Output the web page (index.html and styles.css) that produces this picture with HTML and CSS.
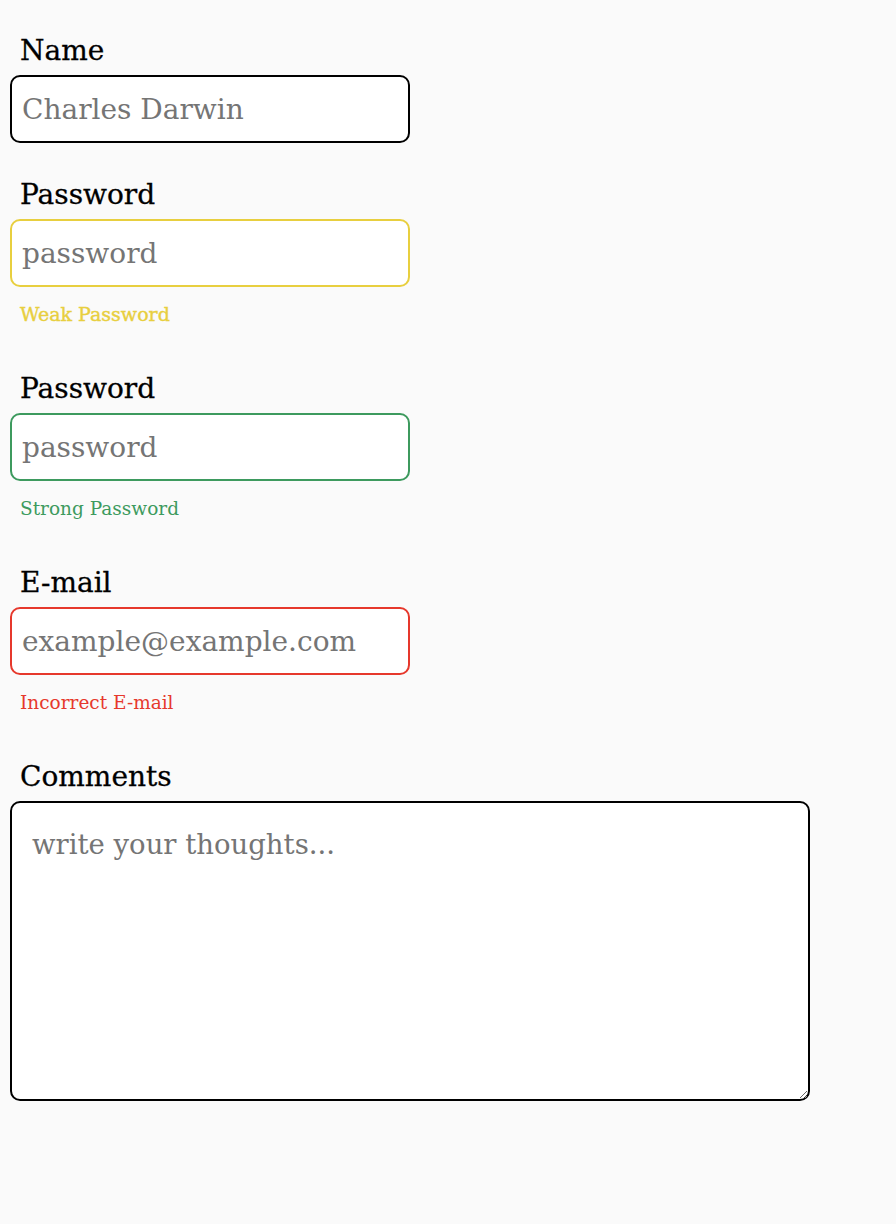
FILE: index.html
```html
<!DOCTYPE html>
<html lang="en">
<head>
<meta charset="utf-8">
<title>Form</title>
<link rel="stylesheet" href="styles.css">
</head>
<body>
<form class="form">
  <div class="field">
    <label class="label" for="name">Name</label>
    <input class="input" id="name" type="text" placeholder="Charles Darwin">
  </div>
  <div class="field">
    <label class="label" for="pw1">Password</label>
    <input class="input input-weak" id="pw1" type="text" placeholder="password">
    <div class="hint hint-weak">Weak Password</div>
  </div>
  <div class="field">
    <label class="label" for="pw2">Password</label>
    <input class="input input-strong" id="pw2" type="text" placeholder="password">
    <div class="hint hint-strong">Strong Password</div>
  </div>
  <div class="field">
    <label class="label" for="email">E-mail</label>
    <input class="input input-error" id="email" type="text" placeholder="example@example.com">
    <div class="hint hint-error">Incorrect E-mail</div>
  </div>
  <div class="field">
    <label class="label" for="comments">Comments</label>
    <textarea class="textarea" id="comments" placeholder="write your thoughts..."></textarea>
  </div>
</form>
</body>
</html>
```

FILE: styles.css
```css
html, body {
  margin: 0;
  padding: 0;
  background: #fafafa;
}
body {
  font-family: "DejaVu Serif", "Liberation Serif", serif;
}
.form {
  padding: 38px 10px 0 10px;
  display: flex;
  flex-direction: column;
}
.field {
  display: flex;
  flex-direction: column;
  margin-bottom: 39px;
}
.label {
  display: block;
  font-size: 28px;
  line-height: 25px;
  height: 25px;
  margin-bottom: 12px;
  padding-left: 10px;
  color: #000;
  -webkit-text-stroke: 0.3px #000;
}
.input {
  box-sizing: border-box;
  width: 400px;
  height: 68px;
  margin: 0;
  padding: 0 10px;
  border: 2px solid #000;
  border-radius: 10px;
  background: #fff;
  font-family: inherit;
  font-size: 28px;
  color: #000;
  outline: none;
}
.input::placeholder, .textarea::placeholder {
  color: #757575;
  opacity: 1;
}
.input-weak { border-color: #e8cf3f; }
.input-strong { border-color: #3d9a5e; }
.input-error { border-color: #e6382c; }
.hint {
  padding-left: 10px;
  margin-top: 15px;
  margin-bottom: 10px;
  font-size: 18.5px;
  line-height: 25px;
  height: 25px;
}
.hint-weak { color: #e8cf3f; font-size: 19px; -webkit-text-stroke: 0.4px #e8cf3f; }
.hint-strong { color: #3d9a5e; }
.hint-error { color: #e6382c; }
.textarea {
  box-sizing: border-box;
  width: 800px;
  height: 300px;
  margin: 0;
  padding: 24px 20px 20px 20px;
  border: 2px solid #000;
  border-radius: 10px;
  background: #fff;
  font-family: inherit;
  font-size: 27.5px;
  line-height: 1.3;
  color: #000;
  outline: none;
  resize: both;
}
```
